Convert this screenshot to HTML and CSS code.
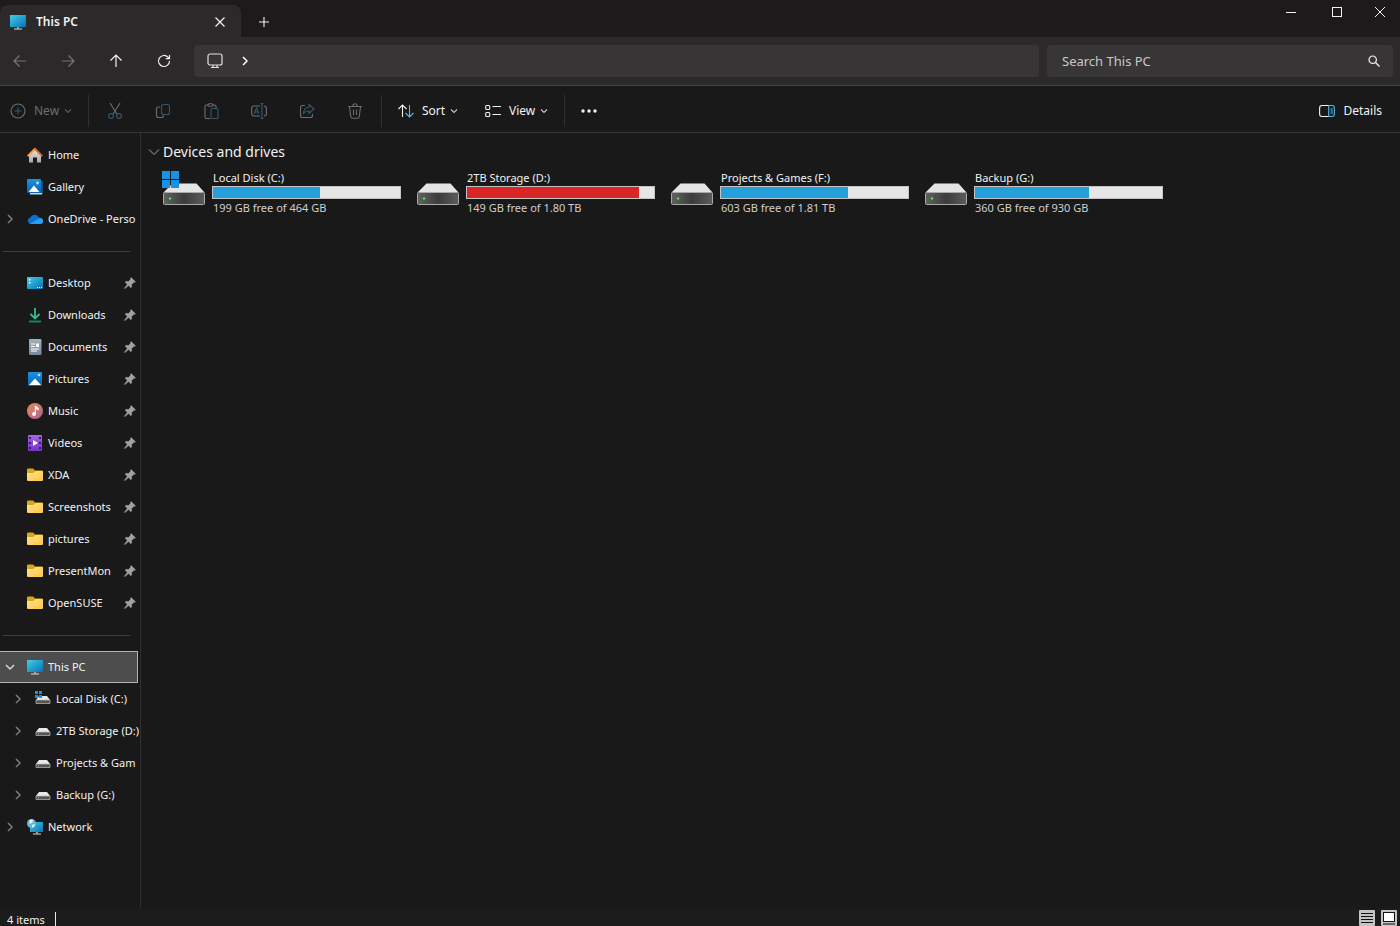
FILE: index.html
```html
<!DOCTYPE html>
<html lang="en">
<head>
<meta charset="utf-8">
<title>This PC</title>
<link rel="stylesheet" href="styles.css">
</head>
<body>
<svg class="sprite" aria-hidden="true">
  <defs>
    <linearGradient id="g-screen" x1="0" y1="0" x2="1" y2="1"><stop offset="0" stop-color="#3fd0e4"/><stop offset="1" stop-color="#0b6fb8"/></linearGradient>
    <linearGradient id="g-pic" x1="0" y1="0" x2="0" y2="1"><stop offset="0" stop-color="#1c93dd"/><stop offset="1" stop-color="#0a62b4"/></linearGradient>
    <linearGradient id="g-music" x1="0" y1="0" x2="1" y2="1"><stop offset="0" stop-color="#e88a5c"/><stop offset="1" stop-color="#b0608c"/></linearGradient>
    <linearGradient id="g-video" x1="0" y1="0" x2="0" y2="1"><stop offset="0" stop-color="#a566e8"/><stop offset="1" stop-color="#7434bd"/></linearGradient>
    <linearGradient id="g-folder" x1="0" y1="0" x2="1" y2="1"><stop offset="0" stop-color="#ffe595"/><stop offset="1" stop-color="#f9c740"/></linearGradient>
    <linearGradient id="g-doc" x1="0" y1="0" x2="0" y2="1"><stop offset="0" stop-color="#a3b1c0"/><stop offset="1" stop-color="#76889c"/></linearGradient>
    <linearGradient id="g-drive" x1="0" y1="0" x2="1" y2="0"><stop offset="0" stop-color="#626262"/><stop offset=".5" stop-color="#3c3c3c"/><stop offset="1" stop-color="#5c5c5c"/></linearGradient>
    <linearGradient id="g-house" x1="0" y1="0" x2="0" y2="1"><stop offset="0" stop-color="#e8e6e6"/><stop offset="1" stop-color="#a8a8aa"/></linearGradient>
  </defs>
  <symbol id="pc" viewBox="0 0 16 16"><path d="M0 1h16v12H0z" fill="url(#g-screen)"/><path d="M7 13h2v1.500H7z" fill="#8aa"/><path d="M4 14.500h8v1H4z" fill="#d5e3ea"/></symbol>
  <symbol id="home" viewBox="0 0 16 16"><path d="M2 7l6-5 6 5v8.500h-4v-5H6v5H2z" fill="url(#g-house)"/><path d="M8 1.800L1.200 8.600" stroke="#f7a03c" stroke-width="2" stroke-linecap="round"/><path d="M8 1.800l6.800 6.800" stroke="#d9622b" stroke-width="2" stroke-linecap="round"/></symbol>
  <symbol id="gallery" viewBox="0 0 16 16"><path d="M3 2h13v13H3z" fill="#174f83"/><path d="M3 14h12v1.500H3z" fill="#c5d8e6"/><rect width="14" height="14" rx="1" fill="url(#g-pic)"/><path d="M1.500 13L7 6.500l5.500 6.500z" fill="#fff"/><circle cx="10.500" cy="4" r="1.400" fill="#bfe3ff"/></symbol>
  <symbol id="cloud" viewBox="0 0 16 16"><path d="M3.500 13a3.400 3.400 0 0 1-.3-6.600A5 5 0 0 1 12 6.500a3.300 3.300 0 0 1 .8 6.500z" fill="#0d6fd0"/><path d="M3 12.800L11.800 7.500a3 3 0 0 1 4 4.200q-.8 1.300-2.800 1.300H4z" fill="#26a0f0"/></symbol>
  <symbol id="desktop" viewBox="0 0 16 16"><rect y="2" width="16" height="12" rx="1" fill="url(#g-screen)"/><path d="M2 4h1.500v1.500H2zM2 7h1.500v1.500H2zM10 12h1v1h-1zM12 12h1v1h-1zM14 12h1v1h-1z" fill="#e8fbff"/></symbol>
  <symbol id="download" viewBox="0 0 16 16"><path d="M8 1v10M3.500 7L8 11.500 12.500 7" fill="none" stroke="#35bd91" stroke-width="1.800"/><path d="M2 14.500h12" stroke="#168b76" stroke-width="1.800"/></symbol>
  <symbol id="document" viewBox="0 0 16 16"><rect x="2" y="0" width="12.500" height="16" rx="1" fill="url(#g-doc)"/><path d="M4 5h4M4 7.500h4M4 10h8M4 12h6" stroke="#fff" stroke-width="1"/><path d="M9 4.500h3v3.500H9z" fill="#fff"/></symbol>
  <symbol id="picture" viewBox="0 0 16 16"><rect x="1" y="1" width="14" height="14" rx="1" fill="url(#g-pic)"/><path d="M2 14l6-6.500 6 6.500z" fill="#fff"/><circle cx="12" cy="4" r="1.300" fill="#bfe3ff"/></symbol>
  <symbol id="music" viewBox="0 0 16 16"><circle cx="8" cy="8" r="8" fill="url(#g-music)"/><circle cx="7" cy="11" r="1.900" fill="#fff"/><path d="M8.300 11V3l3 2.200v1.500L8.800 5.500" fill="#fff" stroke="#fff" stroke-width="1"/></symbol>
  <symbol id="video" viewBox="0 0 16 16"><rect x="1" width="14" height="16" rx="1" fill="url(#g-video)"/><path d="M2 2h2v2H2zM2 7h2v2H2zM2 12h2v2H2zM12 2h2v2h-2zM12 7h2v2h-2zM12 12h2v2h-2z" fill="#3b1770"/><path d="M6 5l5 3-5 3z" fill="#fff"/></symbol>
  <symbol id="folder" viewBox="0 0 16 16"><path d="M0 2.500q0-1 1-1h5l2 2h7q1 0 1 1v4H0z" fill="#dda61c"/><path d="M0 6h6.500l2-2H15q1 0 1 1v8q0 1-1 1H1q-1 0-1-1z" fill="url(#g-folder)"/></symbol>
  <symbol id="disk" viewBox="0 0 16 16"><path d="M4 5h8l3 4H1z" fill="#e9e9e9"/><path d="M1 9h14v3.500H1z" fill="#555" stroke="#bdbdbd" stroke-width=".7"/><path d="M3 10.300h1v1H3z" fill="#7fda80"/></symbol>
  <symbol id="disk-win" viewBox="0 0 16 16"><path d="M4 5h8l3 4H1z" fill="#e9e9e9"/><path d="M1 9h14v3.500H1z" fill="#555" stroke="#bdbdbd" stroke-width=".7"/><path d="M0 0h3v3H0zM4 0h3v3H4zM0 4h3v3H0zM4 4h3v3H4z" fill="#1993e0"/></symbol>
  <symbol id="network" viewBox="0 0 16 16"><path d="M3 3h13v10H3z" fill="url(#g-screen)"/><path d="M9 13h2v1.500H9z" fill="#8aa"/><path d="M6 14.500h8v1H6z" fill="#d5e3ea"/><circle cx="4.500" cy="4.500" r="4.500" fill="#6fb3d8"/><path d="M2 2q2-2 4-1.200L5.500 3.500 3 5zM5 6l3-1-1 3-2 .5z" fill="#e2f2f8"/></symbol>
  <symbol id="pin" viewBox="0 0 12 12"><path d="M7.200.6l4.200 4.200-.9.800-.9-.1-2 2.100.1 2.300-.9.900L4.600 8.600.9 11.500l-.5.100.1-.5L3.400 7.400 1.200 5.200l.9-.9 2.300.1 2.100-2-.1-.9z" fill="#9aa2a8" stroke="#9aa2a8" stroke-width=".5"/></symbol>
  <symbol id="chev-r" viewBox="0 0 8 10"><path d="M2 1l4 4-4 4" fill="none" stroke="currentColor" stroke-width="1.500"/></symbol>
  <symbol id="chev-d" viewBox="0 0 10 8"><path d="M1 2l4 4 4-4" fill="none" stroke="currentColor" stroke-width="1.500"/></symbol>
  <symbol id="drive" viewBox="0 0 44 36"><path d="M10.500 13.500h24l8 9h-41z" fill="#e4e4e6"/><rect x="1.500" y="22.500" width="41" height="12" rx="1" fill="url(#g-drive)" stroke="#a9a9a9"/><circle cx="8" cy="28.500" r="2" fill="#2f7a3a"/><circle cx="8" cy="28.500" r="1.100" fill="#7ee787"/></symbol>
  <symbol id="winlogo" viewBox="0 0 17 17"><path d="M0 0h8v8H0zM9 0h8v8H9zM0 9h8v8H0zM9 9h8v8H9z" fill="#1893e3"/></symbol>
</svg>

<header class="titlebar">
  <div class="tab">
    <svg class="icon"><use href="#pc"/></svg>
    <span class="tab-title">This PC</span>
    <button class="tab-close" aria-label="Close tab"><svg width="10" height="10" viewBox="0 0 10 10"><path d="M.5.5l9 9M9.500.5l-9 9" stroke="currentColor" stroke-width="1.200"/></svg></button>
  </div>
  <button class="tab-new" aria-label="New tab"><svg width="12" height="12" viewBox="0 0 12 12"><path d="M6 1v10M1 6h10" stroke="currentColor" stroke-width="1.100"/></svg></button>
  <div class="window-controls">
    <button aria-label="Minimize"><svg width="10" height="10" viewBox="0 0 10 10"><path d="M0 5.500h10" stroke="currentColor"/></svg></button>
    <button aria-label="Maximize"><svg width="10" height="10" viewBox="0 0 10 10"><rect x=".5" y=".5" width="9" height="9" fill="none" stroke="currentColor"/></svg></button>
    <button aria-label="Close"><svg width="10" height="10" viewBox="0 0 10 10"><path d="M0 0l10 10M10 0L0 10" stroke="currentColor"/></svg></button>
  </div>
</header>

<nav class="navbar" aria-label="Navigation">
  <div class="history">
    <button class="dim" aria-label="Back" disabled><svg width="14" height="14" viewBox="0 0 14 14"><path d="M13 7H1.500M6.500 1.500L1 7l5.500 5.500"/></svg></button>
    <button class="dim" aria-label="Forward" disabled><svg width="14" height="14" viewBox="0 0 14 14"><path d="M1 7h11.500M7.500 1.500L13 7l-5.500 5.500"/></svg></button>
    <button aria-label="Up"><svg width="14" height="14" viewBox="0 0 14 14"><path d="M7 13V1.500M1.500 6.500L7 1l5.500 5.500"/></svg></button>
    <button aria-label="Refresh"><svg width="14" height="14" viewBox="0 0 14 14"><path d="M12.500 7A5.500 5.500 0 1 1 11 3.200L12.300 4.500M12.500 1v3.700H8.800"/></svg></button>
  </div>
  <div class="address">
    <button aria-label="This PC"><svg width="16" height="16" viewBox="0 0 16 16"><rect x="1" y="1" width="14" height="11" rx="2"/><path d="M6 12v2.500M10 12v2.500M4 14.500h8"/></svg></button>
    <button aria-label="Show locations"><svg width="8" height="10"><use href="#chev-r"/></svg></button>
  </div>
  <label class="search">
    <input type="text" placeholder="Search This PC" aria-label="Search This PC">
    <svg width="12" height="12" viewBox="0 0 12 12"><circle cx="4.700" cy="4.700" r="3.700"/><path d="M7.500 7.500l4 4"/></svg>
  </label>
</nav>

<div class="toolbar" role="toolbar">
  <button class="cmd cmd-new" disabled><svg width="16" height="16" viewBox="0 0 16 16"><circle cx="8" cy="8" r="7"/><path class="accent" d="M8 4.500v7M4.500 8h7"/></svg>New<svg class="caret" width="8" height="6" viewBox="0 0 8 6"><path d="M1 1.500l3 3 3-3"/></svg></button>
  <span class="divider"></span>
  <div class="tools">
    <button disabled aria-label="Cut"><svg width="16" height="16" viewBox="0 0 16 16"><path d="M3 0l6.800 11M13 0L6.200 11"/><circle class="accent" cx="4" cy="13" r="2.400"/><circle class="accent" cx="12" cy="13" r="2.400"/></svg></button>
    <button disabled aria-label="Copy"><svg width="16" height="16" viewBox="0 0 16 16"><path d="M5 4H3.500Q1.500 4 1.500 6v6.500q0 2 2 2h3q2 0 2-2"/><rect class="accent" x="6.500" y="1.500" width="8" height="10" rx="2"/></svg></button>
    <button disabled aria-label="Paste"><svg width="16" height="16" viewBox="0 0 16 16"><path d="M5 2H3.500Q2 2 2 3.500v10.500q0 1.500 1.500 1.500H7M10 2h1.500Q13 2 13 3.500V5"/><rect x="5" y=".7" width="5" height="2.600" rx="1.200"/><rect class="accent" x="8" y="5.500" width="7" height="10" rx="1.200"/></svg></button>
    <button disabled aria-label="Rename"><svg width="16" height="16" viewBox="0 0 16 16"><path d="M9 3H3Q.6 3 .6 5.400v5.200Q.6 13 3 13h6M13 3q2.400 0 2.400 2.400v5.200Q15.400 13 13 13"/><path class="accent" d="M11 1v14M9.500.6h3M9.500 15.400h3M3 11l2.500-6L8 11M4 9h3"/></svg></button>
    <button disabled aria-label="Share"><svg width="16" height="16" viewBox="0 0 16 16"><path d="M6 2.500H3.500q-2 0-2 2v8q0 2 2 2h8q2 0 2-2V11"/><path class="accent" d="M10 1.500l5 4.500-5 4.500V8Q6.500 7.800 4.500 10.500 5 4.500 10 4z"/></svg></button>
    <button disabled aria-label="Delete"><svg width="16" height="16" viewBox="0 0 16 16"><path d="M1 3.500h14M5.800 3q.2-2.300 2.200-2.300T10.200 3M2.500 3.500l1.200 10q.2 1.800 2 1.800h4.600q1.800 0 2-1.800l1.200-10M6.500 6.500v5.500M9.500 6.500v5.500"/></svg></button>
  </div>
  <span class="divider"></span>
  <button class="cmd cmd-sort"><svg width="16" height="16" viewBox="0 0 16 16"><path d="M4.500 14V2M.5 6l4-4 4 4"/><path class="accent" d="M11.500 2v12M7.500 10l4 4 4-4"/></svg>Sort<svg class="caret" width="8" height="6" viewBox="0 0 8 6"><path d="M1 1.500l3 3 3-3"/></svg></button>
  <button class="cmd cmd-view"><svg width="16" height="16" viewBox="0 0 16 16"><rect x=".7" y="2.500" width="4" height="4" rx="1"/><rect x=".7" y="9.500" width="4" height="4" rx="1"/><path d="M7.500 3.500H16M7.500 11.500H16"/></svg>View<svg class="caret" width="8" height="6" viewBox="0 0 8 6"><path d="M1 1.500l3 3 3-3"/></svg></button>
  <span class="divider"></span>
  <button class="more" aria-label="See more"><svg width="16" height="4" viewBox="0 0 16 4"><circle cx="2" cy="2" r="1.700"/><circle cx="8" cy="2" r="1.700"/><circle cx="14" cy="2" r="1.700"/></svg></button>
  <button class="cmd details"><svg width="16" height="16" viewBox="0 0 16 16"><path d="M10 2.500H3Q.6 2.500.6 5v6q0 2.500 2.400 2.500h7"/><path class="accent" d="M9.700 2.500H13q2.400 0 2.400 2.500v6q0 2.500-2.400 2.500H9.700zM11.500 6h2.500M11.500 8h2.500M11.500 10h2.500"/></svg>Details</button>
</div>

<div class="body">
  <aside class="sidebar">
    <a href="#" class="row"><span class="twist"></span><svg class="icon"><use href="#home"/></svg><span class="name">Home</span></a>
    <a href="#" class="row"><span class="twist"></span><svg class="icon"><use href="#gallery"/></svg><span class="name">Gallery</span></a>
    <a href="#" class="row"><span class="twist"><svg width="8" height="10"><use href="#chev-r"/></svg></span><svg class="icon"><use href="#cloud"/></svg><span class="name">OneDrive - Perso</span></a>
    <hr>
    <a href="#" class="row"><span class="twist"></span><svg class="icon"><use href="#desktop"/></svg><span class="name">Desktop</span><svg class="pin"><use href="#pin"/></svg></a>
    <a href="#" class="row"><span class="twist"></span><svg class="icon"><use href="#download"/></svg><span class="name">Downloads</span><svg class="pin"><use href="#pin"/></svg></a>
    <a href="#" class="row"><span class="twist"></span><svg class="icon"><use href="#document"/></svg><span class="name">Documents</span><svg class="pin"><use href="#pin"/></svg></a>
    <a href="#" class="row"><span class="twist"></span><svg class="icon"><use href="#picture"/></svg><span class="name">Pictures</span><svg class="pin"><use href="#pin"/></svg></a>
    <a href="#" class="row"><span class="twist"></span><svg class="icon"><use href="#music"/></svg><span class="name">Music</span><svg class="pin"><use href="#pin"/></svg></a>
    <a href="#" class="row"><span class="twist"></span><svg class="icon"><use href="#video"/></svg><span class="name">Videos</span><svg class="pin"><use href="#pin"/></svg></a>
    <a href="#" class="row"><span class="twist"></span><svg class="icon"><use href="#folder"/></svg><span class="name">XDA</span><svg class="pin"><use href="#pin"/></svg></a>
    <a href="#" class="row"><span class="twist"></span><svg class="icon"><use href="#folder"/></svg><span class="name">Screenshots</span><svg class="pin"><use href="#pin"/></svg></a>
    <a href="#" class="row"><span class="twist"></span><svg class="icon"><use href="#folder"/></svg><span class="name">pictures</span><svg class="pin"><use href="#pin"/></svg></a>
    <a href="#" class="row"><span class="twist"></span><svg class="icon"><use href="#folder"/></svg><span class="name">PresentMon</span><svg class="pin"><use href="#pin"/></svg></a>
    <a href="#" class="row"><span class="twist"></span><svg class="icon"><use href="#folder"/></svg><span class="name">OpenSUSE</span><svg class="pin"><use href="#pin"/></svg></a>
    <hr>
    <a href="#" class="row selected" aria-current="page"><span class="twist"><svg width="10" height="8"><use href="#chev-d"/></svg></span><svg class="icon"><use href="#pc"/></svg><span class="name">This PC</span></a>
    <a href="#" class="row child"><span class="twist"><svg width="8" height="10"><use href="#chev-r"/></svg></span><svg class="icon"><use href="#disk-win"/></svg><span class="name">Local Disk (C:)</span></a>
    <a href="#" class="row child"><span class="twist"><svg width="8" height="10"><use href="#chev-r"/></svg></span><svg class="icon"><use href="#disk"/></svg><span class="name">2TB Storage (D:)</span></a>
    <a href="#" class="row child"><span class="twist"><svg width="8" height="10"><use href="#chev-r"/></svg></span><svg class="icon"><use href="#disk"/></svg><span class="name">Projects &amp; Gam</span></a>
    <a href="#" class="row child"><span class="twist"><svg width="8" height="10"><use href="#chev-r"/></svg></span><svg class="icon"><use href="#disk"/></svg><span class="name">Backup (G:)</span></a>
    <a href="#" class="row"><span class="twist"><svg width="8" height="10"><use href="#chev-r"/></svg></span><svg class="icon"><use href="#network"/></svg><span class="name">Network</span></a>
  </aside>

  <main class="content">
    <button class="group" aria-expanded="true"><svg width="12" height="8" viewBox="0 0 12 8"><path d="M1 1.500l5 5 5-5"/></svg>Devices and drives</button>
    <div class="drives">
      <article class="drive">
        <div class="drive-icon"><svg class="drive-art"><use href="#drive"/></svg><svg class="badge"><use href="#winlogo"/></svg></div>
        <div class="drive-info"><div class="drive-name">Local Disk (C:)</div><div class="bar"><div class="fill" style="width:57%"></div></div><div class="free">199 GB free of 464 GB</div></div>
      </article>
      <article class="drive">
        <div class="drive-icon"><svg class="drive-art"><use href="#drive"/></svg></div>
        <div class="drive-info"><div class="drive-name">2TB Storage (D:)</div><div class="bar"><div class="fill full" style="width:92%"></div></div><div class="free">149 GB free of 1.80 TB</div></div>
      </article>
      <article class="drive">
        <div class="drive-icon"><svg class="drive-art"><use href="#drive"/></svg></div>
        <div class="drive-info"><div class="drive-name">Projects &amp; Games (F:)</div><div class="bar"><div class="fill" style="width:68%"></div></div><div class="free">603 GB free of 1.81 TB</div></div>
      </article>
      <article class="drive">
        <div class="drive-icon"><svg class="drive-art"><use href="#drive"/></svg></div>
        <div class="drive-info"><div class="drive-name">Backup (G:)</div><div class="bar"><div class="fill" style="width:61%"></div></div><div class="free">360 GB free of 930 GB</div></div>
      </article>
    </div>
  </main>
</div>

<footer class="status">
  <span class="count">4 items</span>
  <div class="modes">
    <button aria-label="Details view"><svg width="16" height="16" viewBox="0 0 16 16"><rect width="16" height="16" rx="1" fill="#c4c4c4"/><path d="M2 3.500h12M2 6.500h12M2 9.500h12M2 12.500h12" stroke="#111"/></svg></button>
    <button aria-label="Large icons view"><svg width="16" height="16" viewBox="0 0 16 16"><rect width="16" height="16" rx="1" fill="#c4c4c4"/><rect x="2.500" y="2.500" width="11" height="9" fill="#fff" stroke="#111"/><path d="M2 14h12" stroke="#111"/></svg></button>
  </div>
</footer>
</body>
</html>
```
FILE: styles.css
```css
* { box-sizing: border-box; }

body {
  margin: 0;
  height: 100vh;
  display: flex;
  flex-direction: column;
  overflow: hidden;
  background: #191919;
  color: #f2f2f2;
  font: 12px/16px "Noto Sans", "Open Sans", sans-serif;
}

button {
  display: flex;
  align-items: center;
  justify-content: center;
  margin: 0;
  padding: 0;
  border: 0;
  background: none;
  color: inherit;
  font: inherit;
}

svg { display: block; flex: none; }
.sprite { position: absolute; width: 0; height: 0; }
.icon { width: 16px; height: 16px; }

/* Title bar */
.titlebar { display: flex; flex: none; height: 37px; background: #1c1a1b; }
.tab {
  display: flex;
  align-items: center;
  width: 241px;
  margin-top: 5px;
  padding: 2px 9px 0 10px;
  border-radius: 8px 8px 0 0;
  background: #2b292a;
}
.tab-title { flex: 1; margin-left: 10px; font-weight: 600; }
.tab-close { width: 24px; height: 24px; }
.tab-new { width: 46px; margin-top: 6px; }
.window-controls { display: flex; margin-left: auto; }
.window-controls button { width: 46px; height: 24px; }
.window-controls button:last-child { width: 40px; }

/* Navigation bar */
.navbar {
  display: flex;
  flex: none;
  align-items: center;
  height: 49px;
  padding-right: 7px;
  border-bottom: 1px solid #454344;
  background: #2b292a;
}
.navbar svg { fill: none; stroke: currentColor; stroke-width: 1.2px; }
.history { display: flex; gap: 8px; margin-right: 10px; }
.history button { width: 40px; height: 32px; }
.history .dim { color: #777; }
.address {
  display: flex;
  flex: 1;
  align-items: center;
  height: 32px;
  margin-right: 8px;
  padding-left: 5px;
  border-radius: 4px;
  background: #373536;
}
.address button { width: 32px; height: 32px; color: #e2e2e2; }
.address button + button { width: 28px; color: #fff; }
.search {
  display: flex;
  align-items: center;
  width: 346px;
  height: 32px;
  padding: 0 13px 0 15px;
  border-radius: 4px;
  background: #373536;
}
.search input {
  flex: 1;
  min-width: 0;
  padding: 0;
  border: 0;
  outline: 0;
  background: none;
  color: #fff;
  font: 13px/16px "Noto Sans", "Open Sans", sans-serif;
}
.search input::placeholder { color: #c8c8c8; opacity: 1; }

/* Command bar */
.toolbar {
  display: flex;
  flex: none;
  align-items: center;
  height: 47px;
  padding-top: 3px;
  border-bottom: 1px solid #363636;
}
.toolbar svg { fill: none; stroke: currentColor; stroke-width: 1.1px; }
.toolbar .accent { stroke: #58b7ea; }
.toolbar button:disabled { color: #6e6e6e; }
.toolbar button:disabled .accent { stroke: #31586e; }
.toolbar .caret { margin-left: 5px; opacity: .8; }
.divider { width: 1px; height: 32px; background: #303030; }
.cmd { height: 32px; }
.cmd svg:first-child { margin-right: 8px; }
.cmd-new { width: 88px; padding-left: 10px; justify-content: flex-start; }
.tools { display: flex; margin: 0 2px; }
.tools button { width: 48px; height: 32px; }
.cmd-sort { width: 87px; padding-left: 16px; justify-content: flex-start; }
.cmd-view { width: 95px; padding-left: 16px; justify-content: flex-start; }
.more { width: 48px; height: 32px; }
.toolbar .more svg { fill: currentColor; stroke: none; }
.details { margin-left: auto; padding-right: 18px; }

/* Body */
.body { display: flex; flex: 1; min-height: 0; font-size: 11px; }
.sidebar {
  flex: none;
  width: 141px;
  padding: 6px 2px 0 0;
  overflow: hidden;
  border-right: 1px solid #303030;
}
.row {
  display: flex;
  align-items: center;
  height: 32px;
  color: #f2f2f2;
  text-decoration: none;
}
.twist {
  display: flex;
  flex: none;
  justify-content: center;
  width: 19px;
  margin-right: 8px;
  color: #7c7c7c;
}
.name {
  flex: 1;
  min-width: 0;
  margin-left: 5px;
  white-space: nowrap;
}
.child { padding-left: 8px; }
.pin { width: 12px; height: 12px; margin-right: 2px; }
.sidebar hr { height: 1px; margin: 16px 8px 15px 3px; border: 0; background: #3d3d3d; }
.selected { border: 1px solid #b5b5b5; border-left: 0; background: #4d4d4d; }
.selected .twist { color: #d8d8d8; }

.content { flex: 1; min-width: 0; padding: 9px 7px; }
.group { gap: 3px; font-size: 14px; line-height: 20px; }
.group svg { fill: none; stroke: #a8a8a8; stroke-width: 1px; }
.drives { display: flex; flex-wrap: wrap; padding-left: 14px; }
.drive { display: flex; gap: 6px; width: 254px; padding: 8px 15px 0 0; }
.drive-icon { position: relative; flex: none; width: 44px; height: 36px; }
.drive-art { width: 44px; height: 36px; }
.badge { position: absolute; top: 1px; left: 0; width: 17px; height: 17px; }
.drive-info { flex: 1; min-width: 0; white-space: nowrap; }
.drive-name, .free { padding-left: 1px; }
.free { color: #cfcfcf; line-height: 18px; }
.bar { height: 13px; border: 1px solid #c4c4c4; background: #e6e6e6; }
.fill { height: 100%; background: #26a0da; }
.full { background: #da2626; }

/* Status bar */
.status {
  display: flex;
  flex: none;
  align-items: flex-end;
  justify-content: space-between;
  height: 18px;
  padding: 0 3px 0 7px;
  background: #1c1c1c;
  font-size: 11px;
}
.count { height: 14px; padding-right: 10px; border-right: 1px solid #e8e8e8; }
.modes { display: flex; gap: 6px; }
```
